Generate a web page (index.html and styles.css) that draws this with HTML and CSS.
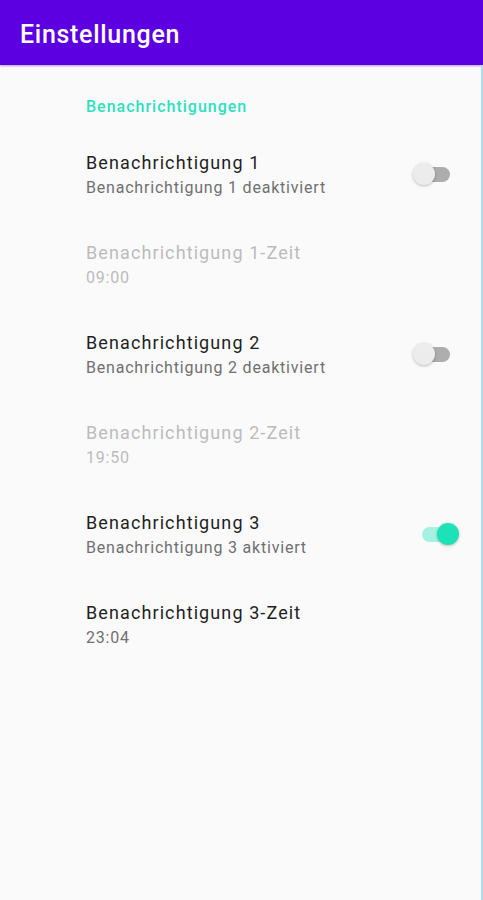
FILE: index.html
```html
<!DOCTYPE html>
<html lang="de">
<head>
  <meta charset="UTF-8" />
  <meta name="viewport" content="width=device-width, initial-scale=1" />
  <title>Einstellungen</title>
  <link rel="stylesheet" href="styles.css">
</head>
<body>
  <div class="toolbar">
    <h1>Einstellungen</h1>
  </div>

  <div class="prefs">
    <div class="category">Benachrichtigungen</div>

    <div class="pref">
      <div class="pref-text">
        <div class="pref-title">Benachrichtigung 1</div>
        <div class="pref-summary">Benachrichtigung 1 deaktiviert</div>
      </div>
      <div class="switch"><span class="track"></span><span class="thumb"></span></div>
    </div>

    <div class="pref disabled">
      <div class="pref-text">
        <div class="pref-title">Benachrichtigung 1-Zeit</div>
        <div class="pref-summary">09:00</div>
      </div>
    </div>

    <div class="pref">
      <div class="pref-text">
        <div class="pref-title">Benachrichtigung 2</div>
        <div class="pref-summary">Benachrichtigung 2 deaktiviert</div>
      </div>
      <div class="switch"><span class="track"></span><span class="thumb"></span></div>
    </div>

    <div class="pref disabled">
      <div class="pref-text">
        <div class="pref-title">Benachrichtigung 2-Zeit</div>
        <div class="pref-summary">19:50</div>
      </div>
    </div>

    <div class="pref">
      <div class="pref-text">
        <div class="pref-title">Benachrichtigung 3</div>
        <div class="pref-summary">Benachrichtigung 3 aktiviert</div>
      </div>
      <div class="switch on"><span class="track"></span><span class="thumb"></span></div>
    </div>

    <div class="pref">
      <div class="pref-text">
        <div class="pref-title">Benachrichtigung 3-Zeit</div>
        <div class="pref-summary">23:04</div>
      </div>
    </div>
  </div>
</body>
</html>
```

FILE: styles.css
```css
html, body {
  margin: 0;
  height: 100%;
}
body {
  font-family: Roboto, "Noto Sans", sans-serif;
  background: #fafafa;
  display: flex;
  flex-direction: column;
}
.toolbar {
  height: 65px;
  background: #5c00e2;
  color: white;
  display: flex;
  align-items: center;
  padding-left: 20px;
  box-shadow: 0 1px 2px rgba(90, 0, 200, 0.4);
}
.toolbar h1 {
  margin: 0;
  font-size: 25px;
  font-weight: 500;
  letter-spacing: 0.7px;
  padding-top: 3px;
}
.prefs {
  flex: 1;
  border-right: 2px solid #b3ddf3;
}
.category {
  padding: 32px 0 12px 86px;
  height: 20px;
  line-height: 20px;
  font-size: 16px;
  font-weight: 500;
  letter-spacing: 1px;
  color: #2ee0bf;
}
.pref {
  height: 90px;
  display: flex;
  align-items: center;
  padding: 0 31px 0 86px;
}
.pref-text {
  flex: 1;
}
.pref-title {
  font-size: 18px;
  line-height: 24px;
  letter-spacing: 1.1px;
  color: #1f1f1f;
}
.pref-summary {
  font-size: 16px;
  line-height: 20px;
  letter-spacing: 0.8px;
  margin-top: 3px;
  color: #707070;
}
.pref.disabled .pref-title,
.pref.disabled .pref-summary {
  color: #bcbcbc;
}
.switch {
  position: relative;
  width: 36px;
  height: 24px;
}
.track {
  position: absolute;
  left: 6px;
  top: 5px;
  width: 30px;
  height: 15px;
  border-radius: 8px;
  background: #adadad;
}
.thumb {
  position: absolute;
  left: -1px;
  top: 1px;
  width: 22px;
  height: 22px;
  border-radius: 50%;
  background: #ececec;
  box-shadow: 0 1px 3px rgba(0, 0, 0, 0.25);
}
.switch.on .track {
  left: 8px;
  background: #a6f2e2;
}
.switch.on .thumb {
  left: 23px;
  background: #1de1b7;
}
```
